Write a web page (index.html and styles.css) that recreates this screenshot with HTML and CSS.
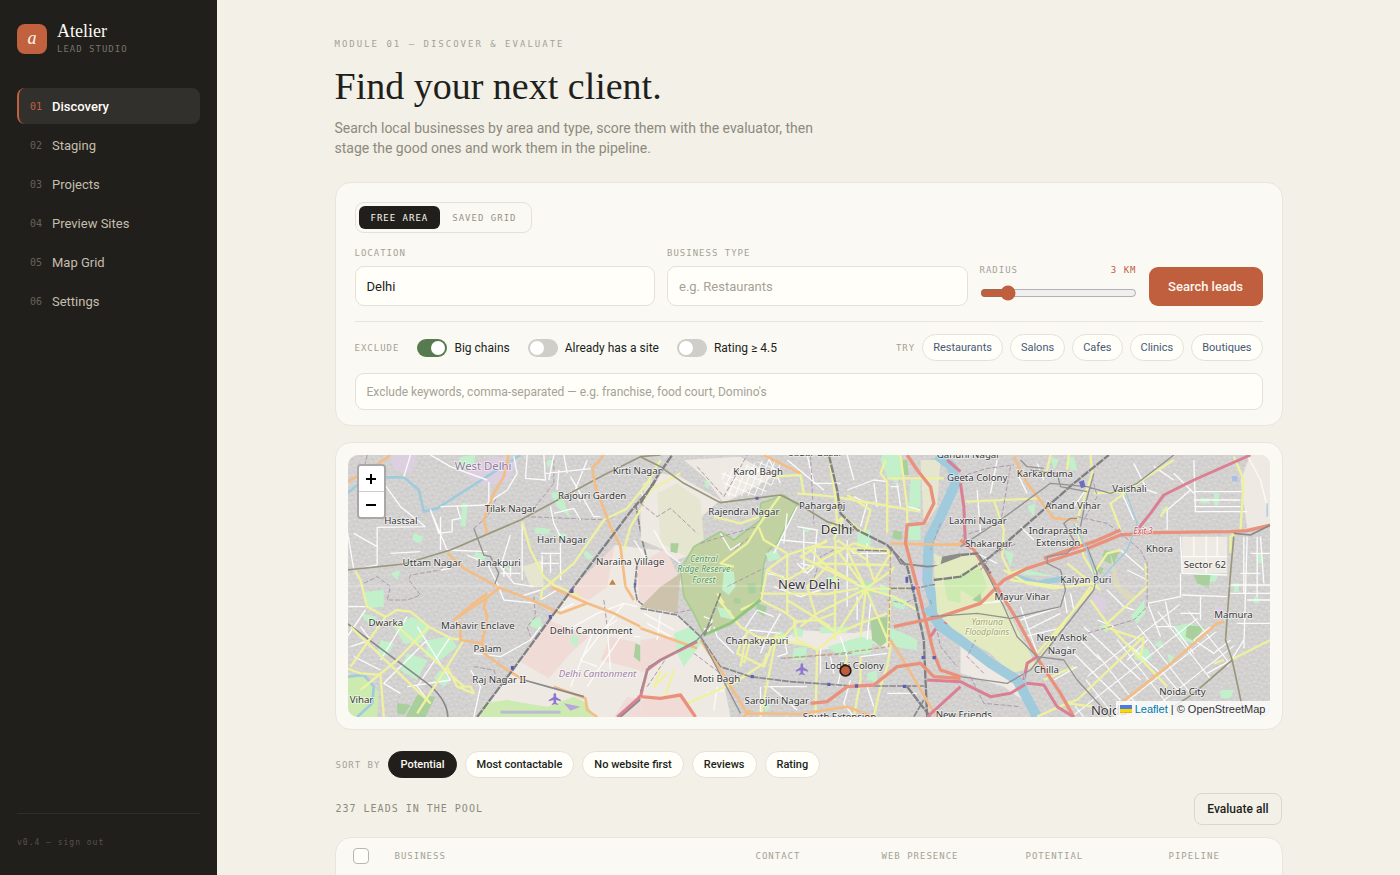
FILE: index.html
```html
<!DOCTYPE html>
<html lang="en">
<head>
<meta charset="utf-8">
<meta name="viewport" content="width=device-width, initial-scale=1">
<title>Atelier Lead Studio</title>
<link rel="stylesheet" href="styles.css">
</head>
<body>
<div class="shell">

<aside class="sidebar">
	<div class="brand">
		<div class="brand-mark">a</div>
		<div>
			<div class="brand-name">Atelier</div>
			<div class="brand-sub">LEAD STUDIO</div>
		</div>
	</div>
	<nav class="nav">
		<a class="nav-item active" href="#"><span class="num">01</span>Discovery</a>
		<a class="nav-item" href="#"><span class="num">02</span>Staging</a>
		<a class="nav-item" href="#"><span class="num">03</span>Projects</a>
		<a class="nav-item" href="#"><span class="num">04</span>Preview Sites</a>
		<a class="nav-item" href="#"><span class="num">05</span>Map Grid</a>
		<a class="nav-item" href="#"><span class="num">06</span>Settings</a>
	</nav>
	<div class="side-foot"><a href="#">v0.4 — sign out</a></div>
</aside>

<main class="main">
<div class="content">

	<div class="eyebrow">MODULE 01 — DISCOVER &amp; EVALUATE</div>
	<h1>Find your next client.</h1>
	<p class="lede">Search local businesses by area and type, score them with the evaluator, then stage the good ones and work them in the pipeline.</p>

	<!-- Search form -->
	<form class="card search">
		<div class="seg">
			<button type="button" class="seg-btn on">FREE AREA</button>
			<button type="button" class="seg-btn">SAVED GRID</button>
		</div>

		<div class="fields">
			<div class="field">
				<label class="mono" for="location">LOCATION</label>
				<input class="input" id="location" type="text" value="Delhi">
			</div>
			<div class="field">
				<label class="mono" for="type">BUSINESS TYPE</label>
				<input class="input" id="type" type="text" placeholder="e.g. Restaurants">
			</div>
			<div class="radius">
				<div class="radius-top"><label class="mono" for="radius">RADIUS</label><span class="mono accent">3 KM</span></div>
				<input id="radius" type="range" min="1" max="15" value="3">
			</div>
			<button type="button" class="btn-primary">Search leads</button>
		</div>

		<div class="filters">
			<span class="mono">EXCLUDE</span>
			<label class="toggle"><input type="checkbox" checked>Big chains</label>
			<label class="toggle"><input type="checkbox">Already has a site</label>
			<label class="toggle"><input type="checkbox">Rating ≥ 4.5</label>
			<div class="try">
				<span class="mono">TRY</span>
				<button type="button" class="chip">Restaurants</button>
				<button type="button" class="chip">Salons</button>
				<button type="button" class="chip">Cafes</button>
				<button type="button" class="chip">Clinics</button>
				<button type="button" class="chip">Boutiques</button>
			</div>
		</div>

		<input class="input keywords" type="text" aria-label="Exclude keywords" placeholder="Exclude keywords, comma-separated — e.g. franchise, food court, Domino's">
	</form>

	<!-- Map -->
	<div class="card map-card">
	<div class="map">
	<svg class="map-svg" viewBox="0 0 2769 786" preserveAspectRatio="xMidYMid slice">
		<defs>
			<pattern id="urban" width="60" height="54" patternUnits="userSpaceOnUse">
				<rect width="60" height="54" fill="#d2d1d0"/>
				<path d="M4 5h5v4h-5zM17 2h3v8h-3zM31 8h8v3h-8zM50 4h4v6h-4zM8 19h7v3h-7zM24 17h4v5h-4zM42 20h6v3h-6zM55 24h4v5h-4zM3 33h4v6h-4zM17 30h9v3h-9zM35 32h3v7h-3zM47 37h7v3h-7zM10 45h4v4h-4zM25 43h6v4h-6zM41 47h4v5h-4z" fill="#dededd"/>
				<path d="M12 11h6v3h-6zM40 2h4v4h-4zM33 22h4v4h-4zM52 14h4v4h-4zM8 27h4v3h-4zM28 37h4v4h-4zM44 29h5v3h-5zM54 46h4v4h-4zM18 49h4v3h-4z" fill="#c5c4c4"/>
			</pattern>
			<pattern id="blocks" width="74" height="66" patternUnits="userSpaceOnUse" patternTransform="rotate(-38)">
				<path d="M0 1H74M1 0V66" stroke="#fff" stroke-width="4" fill="none"/>
			</pattern>
			<pattern id="lanes" width="18" height="24" patternUnits="userSpaceOnUse" patternTransform="rotate(22)">
				<path d="M0 1H18M1 0V24" stroke="#fff" stroke-width="3" fill="none"/>
			</pattern>
			<path id="plane" d="M0-17c3 0 4 4 4 7v5l14 9v4L4 4v8l5 4v3l-9-3-9 3v-3l5-4V4l-14 4V4l14-9v-5c0-3 1-7 4-7z" fill="#8f76cf"/>
		</defs>
		<rect width="2769" height="786" fill="url(#urban)"/>

		<!-- west -->
		<g transform="translate(-21 -45)">
			<path class="lilac" d="M390 75 470 50 535 60 500 125 430 135 375 105z"/>
			<path class="lilac" d="M150 45 230 45 210 100 160 90z"/>
			<path class="land" d="M690 455 825 315 900 325 960 330V831H410L520 685z"/>
			<path class="pink" d="M690 450 822 318 800 440 745 480 690 460zM625 540 745 590 690 640 625 715 540 665zM890 370 960 350V500L895 480zM810 590 880 605 950 640 930 700 780 660zM860 770 960 790V831H820z"/>
			<path class="park" d="M430 790 500 780 620 800 700 770 740 790 760 831H420zM20 700 90 720 115 760 110 831H20z"/>
			<path class="wood" d="M885 610 930 630 915 680 880 650zM230 765 285 770 255 831H195zM170 790 210 795 190 825 170 820z"/>
			<path class="mint" d="M360 50 405 45 400 80 345 90zM585 262 630 268 625 284 583 280zM650 280 680 280 675 295 650 293zM70 455 130 450 130 500 85 505zM160 560 215 530 270 560 240 610 190 610zM260 600 330 590 350 620 300 660 255 650zM120 600 160 610 140 650 110 640zM200 640 260 660 230 720 180 690zM60 520 110 530 90 560zM300 690 330 720 310 740 280 715zM570 540 600 530 605 570 570 560zM735 330 760 350 745 360 730 345zM365 190 382 190 375 260 360 258zM220 280 250 290 240 310 215 300zM620 60 635 60 635 78 620 78zM630 160 660 155 690 235 650 200zM490 380 515 385 505 395zM405 335 440 345 430 360 400 355zM150 400 180 390 170 420zM690 585 715 590 710 620 690 610z"/>
			<path class="sand" d="M545 380 605 360 610 440 570 440zM905 130 960 110V230L920 210z"/>
			<rect x="480" y="812" width="180" height="9" fill="#b9bcd4"/>
			<path class="canal" d="M20 160 80 112 190 112 235 150 250 215 290 205 540 45M20 710 70 705 100 740 95 790 50 831"/>
			<path class="admin" d="M70 430 110 410 150 440 140 480 200 480 240 465 205 420 210 405 300 390 320 360M400 265 440 230 470 170M640 130 640 60M640 130 560 230 800 240 850 210M580 470 585 530 560 560 570 590M80 45 70 90M790 480 800 560M400 680 460 690 470 720"/>
			<path class="minor" d="M270 45 330 80 440 120M445 125V200M520 50 530 100 500 150 440 190M300 200 440 195M350 200 360 235 335 240 335 275 295 280 270 210 320 330 440 335M110 262 255 260M110 262V375M40 280 110 320M110 375 40 390 20 270M150 340 240 335M130 130 180 200 255 260M300 230 300 330M560 45 555 115 615 120 610 45M615 100 760 85M625 120 640 45M650 150 655 90M640 220 700 205 720 240M630 200 640 250 660 290V420M600 340 660 340M605 345V400M630 340V400M600 370H655M545 250V420M510 285 480 380 520 430 580 440M480 400 540 400M490 360V410M510 360V410M380 345 440 370 470 430 490 480 590 490M540 470 600 450M600 480 650 450M330 385 300 390M20 500H75M75 510 20 590M660 510 700 490M720 660 850 490M700 560 770 520 850 490 890 500M690 740 760 570M740 740 860 560M880 590H960M810 690 800 560 830 540M720 660 770 680M690 110 760 230 780 230M740 60 700 160 720 185M670 45 680 100M200 530 120 660M260 600 130 730 180 760M60 560 90 600 30 620M230 560 330 720 200 740M120 690 40 650M330 590 230 740 270 790M400 640 480 650 570 600 600 560M390 690 420 740 400 831M880 300 960 420M900 150 950 280M190 110 210 45"/>
			<path class="rail-thin" d="M20 550 240 715Q320 770 322 831"/>
			<path class="metro" d="M20 390 190 372 330 330 540 240 790 105 900 50 960 45"/>
			<path class="metro-d" d="M400 265 430 345 450 350 475 400 460 440"/>
			<path class="admin" d="M890 400 885 440"/>
			<path class="rail-d" d="M890 370 882 440 890 480 920 505 960 512M885 190 905 300 920 360"/>
			<path class="yellow" d="M45 395 60 420 80 500 135 530 170 510 210 515 265 560 330 595 370 600 320 680 230 820M135 530 30 680M150 540 370 740M30 560 270 790M265 560 170 660 60 750M20 685 60 700 120 705 130 831M320 680 350 740 400 760 390 740 360 740M545 245 570 330 610 410 640 435 720 470M600 480 605 450 700 370 790 240 860 205 920 130 960 60M960 110 900 210 870 260 850 330M940 760 940 720 960 690"/>
			<path class="orange" d="M20 125 80 95 150 45M505 45 490 110 460 160 430 240 440 280M320 340 370 385 480 445 560 475 660 520 740 490 630 440M740 490 820 520 960 590M475 445 430 480 340 540 400 490 440 460M440 470 430 500 440 530 425 610 360 600 360 545M425 610 430 640 500 690 550 720M640 740 735 775 740 810 770 831M790 45 755 85 765 140 810 260 840 320 855 440 880 480M890 770 960 775"/>
			<path class="rail" d="M410 831 520 685 700 440 870 215 960 110"/>
			<path class="red" d="M960 660 930 680 910 760 830 831"/>
			<path class="rail-thin" d="M960 665 935 690 915 765 840 831M550 720 640 745 730 770"/>
			<path d="M816 418 826 434H806z" fill="#c9803f"/>
			<use href="#plane" x="643" y="776"/>
			<path d="M670 790 720 800 690 812z" fill="#b7a6dd"/>
			<path d="M690 448h9v11h-9zM625 525h9v11h-9zM511 678h9v11h-9zM880 430h7v12h-7z" fill="#5a5aa8"/>
		</g>

		<!-- centre -->
		<g transform="translate(879 -45)">
			<path class="land" d="M0 300 60 325 110 360 160 340 160 250 240 180 120 110 60 100 0 210zM0 500 110 520 180 600 200 640 240 680 270 831H0zM130 60 300 50 400 110 250 190 190 110zM430 600 540 630 700 610 750 630 740 560 640 580 470 570z"/>
			<path class="sand" d="M50 160 110 130 180 180 190 300 140 350 60 310zM840 60 900 60 890 200 850 260z"/>
			<path class="pink" d="M0 370 75 325 100 380 130 440 60 450 0 490zM0 600 80 590 170 605 30 680 0 700zM0 780 120 770 160 831H0z"/>
			<path d="M120 400 110 520 0 500 60 440z" fill="#cdc3ac"/>
			<path class="forest" d="M360 190 430 165 470 195 440 250 410 310 385 330 370 370 360 480 270 550 190 585 160 520 130 470 120 390 160 320 240 275 280 300 320 270 360 240z"/>
			<path class="mint" d="M250 390 280 395 285 440 265 465 245 450zM375 340 410 330 420 355 385 365zM650 270H690V320H650zM720 60 740 110 770 130 790 90 780 45H725zM810 120H840V200L805 210zM100 580 150 560 190 600 130 680 110 640zM460 560 490 570 485 590 455 590zM540 560H620V580H540zM460 625 500 620 495 660 455 660zM560 620 660 590 700 600 690 640 600 650zM740 560 790 580 830 600 830 630 760 620zM680 700 710 690 710 725 680 720zM720 430 750 450 740 470 715 460zM800 255H840V300H805zM370 780 390 800 375 820zM420 570 440 590 400 620zM750 470 800 480 790 510 760 500zM480 260 510 265 500 280zM190 120 210 130 200 150zM560 410 590 410 590 430 560 430zM230 500 270 510 280 540 240 530z"/>
			<path class="wood" d="M350 490 380 500 370 530 345 510zM760 270 785 275 785 300 755 295zM690 540 740 530 745 600 720 620 695 600zM785 60 800 60 805 105 790 105zM90 310 115 310 110 340 90 335zM320 430 345 430 345 460 325 462zM280 475 300 475 300 492 280 490zM900 420 950 410 960 500 930 490z"/>
			<circle cx="676" cy="446" r="24" fill="#b5e5b9"/>
			<path class="lilac" d="M825 390 850 380 855 440 830 445z"/>
			<path class="flood" d="M880 340 960 380V560L900 500z"/>
			<path class="river" d="M890 45 935 80 945 130 900 230 865 300 860 420 890 520 960 600"/>
			<path d="M905 350 960 340V375L900 375z" fill="#8c8c8c"/>
			<path d="M240 100 400 50 430 90 370 165 260 170z" fill="url(#lanes)"/>
			<path class="minor" d="M380 45 420 130M440 60 550 150M500 45 520 130M520 130H600M620 150 700 120 740 125M620 45 640 120M640 170 680 190 660 260M770 130 780 200M700 130 710 200M750 140H775M400 340 470 200M440 220 430 310M470 260 530 270 520 370M490 270V400M480 370 520 380 500 400 470 370M420 300 530 310M380 400 430 410M400 440 480 470 540 450M620 320 640 340 740 340M680 310V380M420 520 380 590 360 640M400 530 350 510 310 570M430 590 440 640 410 650M300 600 330 570 420 580M280 640 230 590 220 560M360 740 360 831M370 740H500M390 740 470 810M230 740 220 810M200 760 250 750M630 720 610 790 640 831M680 740 700 800M740 760H830M600 700 590 740M660 650 740 640M570 650 580 700M190 530 215 540 205 575 190 565M120 370 80 340 40 270M240 280 270 330 300 310M800 200 840 210M540 620V700M600 590 620 650M620 300V500M650 470V540M690 490 680 600M10 520 100 570M20 550 90 590M60 520 50 600"/>
			<path class="admin" d="M0 190 50 230 90 205 170 280M180 310 260 285 350 260 330 290 280 330M260 440 370 385M100 520 150 510M170 80 250 170 320 45M510 45 520 250M20 740 80 650M900 250 870 330M870 480 900 620 950 680M420 655 640 640M160 640 240 700M740 480 790 490 840 470M580 330 540 350 520 420"/>
			<path class="yellow" d="M0 190 30 150 120 100M220 230 300 250 355 230M420 165 350 262 320 310 240 370 280 380M355 262 370 300 440 340M440 345 560 305M585 300V340L640 310M580 340 440 420 380 390 362 480 300 510M380 390 440 345V520M360 460 560 462 655 445M360 480 430 515 470 545 430 590 300 610M585 340 583 600M500 320 560 380 650 430M525 370 750 375M570 560 440 480M530 320 740 330 755 350M560 300 480 350M590 300 680 360 700 420M640 310 750 340M750 340 700 425M676 446 760 470 830 510M676 446 750 620M676 446 590 580M676 446 530 520 480 560M676 446 590 330M676 446 755 390M676 446 620 330M676 446H820M676 446 660 590M676 446 480 350M580 520 530 540 500 440 560 380M590 580 530 540 470 545M530 630 470 600 460 540M590 580 530 630 525 830M590 580 660 550 740 520M470 160 580 170 640 180 840 215M400 110 480 105 490 160M565 45 575 110 585 170 590 260M735 60 720 100 740 125 740 280M740 115H910M780 45 800 200 800 250M620 165 690 210 670 280 610 230 560 270M610 230 580 300M235 480 300 560 350 590 520 620M300 610 290 640 370 680 400 600 410 580M320 570 300 680M330 600 310 670M140 790 280 730 370 670 380 640M410 580 360 831M660 650 660 720 640 831M620 650 610 700M750 620 740 680 720 740 700 831M750 480 740 610M230 460 250 490M60 690 40 740 80 700M100 690 70 780M750 400 760 380"/>
			<path d="M360 480 270 550 190 585" fill="none" stroke="#8fc67a" stroke-width="9"/>
			<path class="admin-o" d="M750 330 745 620 600 640 430 655"/>
			<path class="metro" d="M0 50 60 80 130 130 240 188 420 165 470 190 560 245 640 270"/>
			<path class="rail-d" d="M0 505 110 525 180 590 240 680 330 710 450 725 640 738H850M240 460 190 590M750 445 820 445 960 420M820 830 850 780M650 330 740 333"/>
			<path class="rail" d="M0 190 50 110 95 45M565 45 590 150 600 220 650 270 740 315 800 380 820 460 850 600 855 720 860 831M800 740 870 831"/>
			<path class="rail-thin" d="M750 320 780 370 860 380 960 372"/>
			<path class="orange" d="M0 565 100 600 170 625M180 600 240 690 320 820 480 822 620 800 700 831M370 45 480 100M750 310 960 315M750 600 800 680 870 800 890 831M330 810 310 831"/>
			<path class="trunk" d="M800 45 830 90 870 140 880 190 850 250 800 255 795 310 830 440 860 560 880 640 900 690 960 710M0 770 60 775 120 765 165 831M510 790 560 785 620 740 700 735 770 680 840 670 880 710 960 715"/>
			<path class="red" d="M0 770 20 690 60 660 170 605M870 590 890 560 960 530M860 831 960 740M920 60 960 95"/>
			<path class="metro-d" d="M0 755 25 680 170 600 215 550M180 590 300 820"/>
			<use href="#plane" x="484" y="687"/>
			<path d="M345 170h9v9h-9zM330 705h10v10h-10zM560 728h10v10h-10zM643 733h10v10h-10zM795 410h8v18h-8zM813 438h10v12h-10zM843 648h10v10h-10zM876 648h10v10h-10zM787 734h10v10h-10z" fill="#5f5fb0"/>
		</g>

		<!-- east -->
		<g transform="translate(1839 -45)">
			<path class="flood" d="M-80 380 0 350 50 340 100 440 150 530 230 680 150 700 90 640 0 590-70 520z"/>
			<path class="park" d="M0 400 60 385 80 440 50 480 0 450zM-50 420 0 410 0 490-40 480z"/>
			<path class="land" d="M870 45H940V250L860 265 840 120zM665 290H800V400H665zM0 590 90 660 180 720 200 790 130 740 0 700z"/>
			<path class="river" d="M-100 500-60 560 0 600 90 670 170 720 230 831"/>
			<path class="river-s" d="M165 410 230 430 310 415"/>
			<path class="mint" d="M760 160H775V195H760zM720 175H745V190H720zM530 630 560 625 575 650 550 670 520 655zM640 560 680 550 730 560 700 610 660 600zM510 530 550 480 555 520 530 550zM725 400 775 400 765 425 730 425zM890 340H905V370H890zM820 430H835V455H820zM415 560 445 550 440 580zM200 200 225 190 220 230zM320 50 340 50 350 90 330 90zM170 400 200 390 290 410 200 405zM130 330 160 340 150 380zM580 615 600 600 610 625zM620 640 640 650 630 680zM880 470H895V490H880zM780 750 820 750 810 775 780 775zM270 50 295 60 280 90zM600 210 620 200 615 220z"/>
			<path class="wood" d="M680 555 730 560 705 605 675 590zM35 480 60 460 65 490zM700 405 750 405 745 445 710 430zM430 330 475 335 460 375 425 360zM400 375 430 385 420 405z"/>
			<path d="M450 340 480 440 530 470 500 480 460 440z" fill="#dcd9bf"/>
			<path class="lilac" d="M400 460 440 480 430 520 400 500zM760 500 790 500 785 530 760 525z"/>
			<path d="M410 640 640 480 850 640 600 831H330z" fill="url(#blocks)"/>
			<path class="minor" d="M700 60 705 215 840 215M705 155H850M700 180H840M700 200H840M705 215H860M620 210 690 150M620 210V270M640 100 700 160M580 80 640 120M660 290 665 400 800 405M665 350H800M737 290V400M700 290V350M770 290V350M660 400V470L560 490M860 290 850 625M890 290V470M810 435H930M810 460H930M870 340H930M830 550H930M840 400H900M665 465 800 470M720 470V540M660 520H720M560 485 600 590M615 485 630 560M590 560H640M750 560 700 600M700 600 760 640 810 600M850 600 800 680M930 480H860M900 290 910 430M850 290V460M50 150 60 280M90 160 110 60M180 260 220 300M60 490 170 480M180 500 230 640M200 570 300 520M190 590 320 560M310 460 320 520M330 460 340 510M180 540 300 500M350 590 420 660M320 620 480 780M370 560 540 720M410 540 460 560M500 390 560 420M440 450 490 500 520 510M480 330 550 390M390 130 340 200M520 240 480 150M520 70 560 150 590 160M230 70 250 120M170 100 200 160M280 720 350 680M860 45 900 120 920 200M30 330 110 370M740 700 830 650M600 690 660 760M500 610 600 700M640 560 700 640M560 600 500 660"/>
			<path class="yellow" d="M15 185 240 175M100 180 130 270 125 350 150 400 260 365M130 390 200 430 280 445 400 430M150 420 300 440M410 430 230 640M390 440 240 650M345 250 370 350 400 400 440 340 480 330M320 370 420 450M390 45 395 100 350 240M270 45 260 90 240 100M325 45 320 90M400 160 500 155 450 190 480 270M500 155 560 110 640 60M390 480 440 550 620 740M440 550 560 440 555 370M550 590 350 780 320 790M250 720 340 680M430 560 550 600 540 650M820 50 850 120 840 270 810 290V340M810 660 930 600M790 660 760 670M620 200 600 230M230 830 320 790 400 800"/>
			<path class="orange" d="M160 50 200 130 280 235 350 240M480 790 620 680 770 550 790 545M-40 315 10 310"/>
			<path class="trunk" d="M-200 560-60 530 60 490 130 420 200 385 370 330 480 285 580 278 810 275 860 272 930 255M0 300 40 330 90 410 170 540 240 670 300 760 340 831"/>
			<path class="trunk" d="M250 355 400 305 480 270"/>
			<path class="red" d="M870 45 700 120 610 165 570 220 530 270M-100 720 0 725 40 745 90 770 150 760 200 730 250 735 290 800 340 831M0 130 10 200 15 320M190 720 200 670 230 650"/>
			<path class="rail" d="M-80 420 0 410 90 350 180 270 340 130 445 45M0 345 50 340 90 400"/>
			<path class="metro-d" d="M0 320 120 240 270 130 380 140 450 160 530 130 640 45M210 90 290 100 300 140 380 155M180 60 200 80 250 85M-90 530 50 520 150 535 300 500 315 450 300 390 260 370 260 350 320 340 345 310 310 250 330 235 350 235M380 320 410 400 400 450 330 540 210 690 140 730 0 710M50 340 130 500 170 590 230 650M230 650 310 660 350 720 450 831M400 100 370 210 360 260"/>
			<path class="metro" d="M820 290 810 400 795 600 815 660 845 800M815 660 700 760 640 800"/>
			<path class="rail-thin" d="M820 280 870 285 930 255"/>
			<path class="admin" d="M350 230 440 250 480 280 540 330 560 370 560 500 520 540 380 580M395 110 410 170 370 240M0 110 80 85 160 75M150 80 120 250 0 290M70 700 20 650 45 600M30 710 70 790 180 800M60 390 100 340 170 310"/>
			<path class="canal-s" d="M490 140 530 250 500 330 410 430 380 330 340 250M190 700 215 831M920 190V230"/>
			<path d="M355 125 370 120 375 140 362 145z" fill="#6f6fc0"/>
			<path d="M815 108h16v16h-16z" fill="#a9bfe8"/>
		</g>
		<path d="M0 393H2769" stroke="#fff" stroke-opacity=".4" stroke-width="3"/>

		<!-- labels -->
		<g class="lbl" transform="translate(-21 -45)">
			<text class="lbl-area" x="428" y="90">West Delhi</text>
			<text x="890" y="103">Kirti Nagar</text>
			<text x="755" y="177">Rajouri Garden</text>
			<text x="510" y="215">Tilak Nagar</text>
			<text x="181" y="252">Hastsal</text>
			<text x="664" y="308">Hari Nagar</text>
			<text x="275" y="379">Uttam Nagar</text>
			<text x="476" y="379">Janakpuri</text>
			<text x="869" y="375">Naraina Village</text>
			<text x="136" y="559">Dwarka</text>
			<text x="412" y="566">Mahavir Enclave</text>
			<text x="441" y="637">Palam</text>
			<text x="752" y="582">Delhi Cantonment</text>
			<text class="lbl-it" x="771" y="710">Delhi Cantonment</text>
			<text x="476" y="728">Raj Nagar II</text>
			<text x="63" y="788">Vihar</text>
		</g>
		<g class="lbl" transform="translate(879 -45)">
			<text x="525" y="48">Sadar Bazar</text>
			<text x="353" y="105">Karol Bagh</text>
			<text x="310" y="224">Rajendra Nagar</text>
			<text x="545" y="208">Paharganj</text>
			<text class="lbl-city" x="588" y="283">Delhi</text>
			<text class="lbl-city" x="506" y="448">New Delhi</text>
			<text class="lbl-wood" x="190" y="366">Central</text>
			<text class="lbl-wood" x="190" y="397">Ridge Reserve</text>
			<text class="lbl-wood" x="190" y="428">Forest</text>
			<text x="349" y="613">Chanakyapuri</text>
			<text x="642" y="687">Lodhi Colony</text>
			<text x="229" y="725">Moti Bagh</text>
			<text x="409" y="792">Sarojini Nagar</text>
			<text x="597" y="840">South Extension</text>
		</g>
		<g class="lbl" transform="translate(1839 -45)">
			<text x="24" y="55">Gandhi Nagar</text>
			<text x="50" y="122">Geeta Colony</text>
			<text x="253" y="112">Karkarduma</text>
			<text x="507" y="155">Vaishali</text>
			<text x="337" y="208">Anand Vihar</text>
			<text x="52" y="253">Laxmi Nagar</text>
			<text x="293" y="282">Indraprastha</text>
			<text x="293" y="319">Extension</text>
			<text x="84" y="322">Shakarpur</text>
			<text class="lbl-exit" x="548" y="283">Exit 3</text>
			<text x="597" y="337">Khora</text>
			<text x="733" y="383">Sector 62</text>
			<text x="376" y="428">Kalyan Puri</text>
			<text x="185" y="481">Mayur Vihar</text>
			<text x="819" y="534">Mamura</text>
			<text class="lbl-flood" x="80" y="554">Yamuna</text>
			<text class="lbl-flood" x="80" y="585">Floodplains</text>
			<text x="304" y="603">New Ashok</text>
			<text x="304" y="641">Nagar</text>
			<text x="258" y="699">Chilla</text>
			<text x="666" y="764">Noida City</text>
			<text class="lbl-city" x="446" y="826">Noida</text>
			<text x="10" y="834">New Friends</text>
		</g>
		<circle cx="1494" cy="647" r="16" fill="#bf5b38" stroke="#1f1d19" stroke-width="5"/>
	</svg>
	<div class="zoom">
		<button type="button" aria-label="Zoom in"><svg viewBox="0 0 12 12"><path d="M6 1v10M1 6h10"/></svg></button>
		<button type="button" aria-label="Zoom out"><svg viewBox="0 0 12 12"><path d="M1 6h10"/></svg></button>
	</div>
	<div class="attrib"><svg viewBox="0 0 12 8"><path fill="#4c7be1" d="M0 0h12v4H0z"/><path fill="#ffd500" d="M0 4h12v3H0z"/><path fill="#e0bc00" d="M0 7h12v1H0z"/></svg> <a href="#">Leaflet</a> | © OpenStreetMap</div>
	</div>
	</div>

	<!-- Sorting -->
	<div class="sort">
		<span class="mono">SORT BY</span>
		<button type="button" class="pill on">Potential</button>
		<button type="button" class="pill">Most contactable</button>
		<button type="button" class="pill">No website first</button>
		<button type="button" class="pill">Reviews</button>
		<button type="button" class="pill">Rating</button>
	</div>

	<div class="pool">
		<span class="pool-count">237 LEADS IN THE POOL</span>
		<button type="button" class="btn-line">Evaluate all</button>
	</div>

	<div class="card leads">
		<table>
			<thead>
				<tr>
					<th class="c-check"><input type="checkbox" aria-label="Select all"></th>
					<th>BUSINESS</th>
					<th class="c-contact">CONTACT</th>
					<th class="c-web">WEB PRESENCE</th>
					<th class="c-pot">POTENTIAL</th>
					<th class="c-pipe">PIPELINE</th>
				</tr>
			</thead>
		</table>
	</div>

</div>
</main>
</div>
</body>
</html>
```
FILE: styles.css
```css
* { box-sizing: border-box; }

body {
	margin: 0;
	background: #f3f0e8;
	color: #211f1b;
	font-family: Roboto, "Liberation Sans", sans-serif;
	font-size: 13px;
}

button, input { font-family: inherit; margin: 0; }
a { text-decoration: none; }

.shell { display: flex; height: 100vh; }

/* sidebar */
.sidebar {
	display: flex;
	flex-direction: column;
	flex: none;
	width: 217px;
	padding: 21px 17px 24px;
	background: #211f1b;
}
.brand {
	display: flex;
	align-items: center;
	gap: 10px;
	height: 36px;
}
.brand-mark {
	width: 30px;
	height: 30px;
	border-radius: 8px;
	background: #c1613e;
	color: #fbf6ee;
	font: italic 18px/29px "Liberation Serif", serif;
	text-align: center;
}
.brand-name {
	color: #fbf9f2;
	font: 18px/20px "Liberation Serif", serif;
}
.brand-sub {
	color: #77736a;
	font: 9px/16px "DejaVu Sans Mono", monospace;
	letter-spacing: 1px;
}
.nav {
	display: flex;
	flex-direction: column;
	gap: 3px;
	margin-top: 31px;
}
.nav-item {
	display: flex;
	align-items: center;
	height: 36px;
	padding-left: 11px;
	border-left: 2px solid transparent;
	border-radius: 8px;
	color: #c4bead;
}
.num {
	width: 22px;
	color: #66625a;
	font: 10px "DejaVu Sans Mono", monospace;
}
.nav-item.active {
	border-left-color: #c1613e;
	background: #31302c;
	color: #fffdf8;
	font-weight: 500;
}
.active .num { color: #c1613e; }
.side-foot {
	margin-top: auto;
	padding-top: 21px;
	border-top: 1px solid #302e2a;
}
.side-foot a {
	display: block;
	color: #57534b;
	font: 8px/16px "DejaVu Sans Mono", monospace;
	letter-spacing: 1px;
}

/* page */
.main {
	flex: 1;
	min-width: 0;
	padding: 37px 24px 0;
	overflow: hidden;
}
.content { max-width: 948px; margin: 0 auto; }
.mono, .eyebrow, .pool-count, th {
	color: #a5a296;
	font: 9px/12px "DejaVu Sans Mono", monospace;
	letter-spacing: 1px;
}
.mono.accent { color: #c1613e; }
.eyebrow { line-height: 14px; letter-spacing: 2px; }
h1 {
	margin: 12px 0 9px;
	font: 38px/46px "Liberation Serif", serif;
}
.lede {
	max-width: 500px;
	margin: 0 0 24px;
	color: #8d8a7d;
	font-size: 14px;
	line-height: 20px;
}
.card {
	border: 1px solid #e8e5dc;
	border-radius: 16px;
	background: #faf9f3;
}

/* search */
.search { padding: 19px 19px 15px; }
.seg {
	display: inline-flex;
	padding: 3px;
	border: 1px solid #e4e1d8;
	border-radius: 9px;
}
.seg-btn {
	height: 23px;
	padding: 0 12px;
	border: 0;
	border-radius: 6px;
	background: none;
	color: #97948a;
	font: 9px "DejaVu Sans Mono", monospace;
	letter-spacing: 1px;
}
.seg-btn.on { background: #211f1b; color: #faf7ef; }
.fields {
	display: grid;
	grid-template-columns: 1fr 1fr 157px 114px;
	align-items: end;
	gap: 12px;
	margin-top: 14px;
}
.field { display: flex; flex-direction: column; gap: 7px; }
.input {
	width: 100%;
	height: 40px;
	padding: 0 11px;
	border: 1px solid #e4e1d8;
	border-radius: 9px;
	background: #fffef9;
	color: #211f1b;
	font-size: 13px;
}
.input::placeholder { color: #a5a296; }
.radius { padding-bottom: 5px; }
.radius-top { display: flex; justify-content: space-between; }
.radius input {
	display: block;
	width: 100%;
	height: 16px;
	margin-top: 9px;
	accent-color: #bf5f3d;
}
.btn-primary {
	height: 39px;
	border: 0;
	border-radius: 9px;
	background: #bf5f3d;
	color: #fdf6ee;
	font-size: 13px;
	font-weight: 500;
}
.filters {
	display: flex;
	align-items: center;
	gap: 18px;
	margin-top: 15px;
	padding: 12px 0;
	border-top: 1px solid #e8e5dc;
}
.toggle {
	display: flex;
	align-items: center;
	gap: 7px;
	font-size: 12px;
}
.toggle input {
	appearance: none;
	width: 30px;
	height: 18px;
	padding: 2px;
	border-radius: 9px;
	background: #cfcec9;
}
.toggle input::before {
	content: "";
	display: block;
	width: 14px;
	height: 14px;
	border-radius: 50%;
	background: #fff;
}
.toggle input:checked { background: #577a50; }
.toggle input:checked::before { margin-left: auto; }
.try {
	display: flex;
	align-items: center;
	gap: 7px;
	margin-left: auto;
}
.chip, .pill {
	height: 27px;
	padding: 0 10px;
	border: 1px solid #e4e1d8;
	border-radius: 14px;
	background: #fffef9;
	color: #465a75;
	font-size: 11px;
}
.keywords { display: block; height: 37px; font-size: 12px; }

/* map */
.map-card { margin-top: 16px; padding: 12px; }
.map {
	position: relative;
	height: 262px;
	border-radius: 10px;
	overflow: hidden;
}
.map-svg { display: block; width: 100%; height: 100%; }
.map-svg path { stroke-linejoin: round; }
.land { fill: #eeeae3; }
.pink { fill: #f0dbd6; }
.lilac { fill: #dccfe0; }
.sand { fill: #e6e5cf; }
.park { fill: #cdeab0; }
.wood { fill: #a9cf9c; }
.mint { fill: #c2f0cb; }
.flood { fill: #e4eabf; }
.forest { fill: #c1d1a2; stroke: #a3cc8f; stroke-width: 5; }
.river, .river-s, .canal, .canal-s { fill: none; stroke: #9fcbdc; }
.river { stroke-width: 30; }
.river-s { stroke-width: 16; }
.canal { stroke-width: 8; }
.canal-s { stroke-width: 4; }
.minor, .yellow, .orange, .trunk, .red, .rail, .rail-d, .rail-thin,
.metro, .metro-d, .admin, .admin-o { fill: none; }
.minor { stroke: #fbfbfb; stroke-width: 4; }
.yellow { stroke: #edf1a0; stroke-width: 7; }
.orange { stroke: #f3bd85; stroke-width: 8; }
.trunk { stroke: #ea917c; stroke-width: 10; }
.red { stroke: #db7f92; stroke-width: 9; }
.rail { stroke: #808084; stroke-width: 7; stroke-dasharray: 26 3; }
.rail-d { stroke: #88888c; stroke-width: 5; stroke-dasharray: 20 3; }
.rail-thin { stroke: #8a888b; stroke-width: 5; }
.metro { stroke: #99987d; stroke-width: 5; }
.metro-d { stroke: #939292; stroke-width: 4; }
.admin { stroke: #ae98ae; stroke-width: 3; stroke-dasharray: 14 6; }
.admin-o { stroke: #c9a77e; stroke-width: 4; stroke-dasharray: 14 6; }
.lbl {
	fill: #383838;
	stroke: #fff;
	stroke-opacity: .6;
	stroke-width: 5;
	paint-order: stroke;
	font: 29px "Noto Sans", sans-serif;
	text-anchor: middle;
}
.lbl-city { font-size: 39px; }
.lbl-area { fill: #957a9c; font-size: 34px; }
.lbl-it { fill: #a37fa6; font-style: italic; }
.lbl-wood { fill: #4f9a55; font-size: 26px; font-style: italic; }
.lbl-flood { fill: #a1a65c; font-size: 26px; font-style: italic; }
.lbl-exit { fill: #cc5560; font-size: 24px; font-style: italic; }
.zoom {
	position: absolute;
	top: 9px;
	left: 9px;
	border: 2px solid #a9a8a6;
	border-radius: 4px;
	overflow: hidden;
}
.zoom button {
	display: grid;
	place-items: center;
	box-sizing: content-box;
	width: 25px;
	height: 25px;
	padding: 0;
	border: 0;
	background: #fff;
}
.zoom button + button { border-top: 1px solid #ccc; }
.zoom svg { width: 12px; height: 12px; fill: none; stroke: #000; stroke-width: 2; }
.attrib {
	position: absolute;
	right: 0;
	bottom: 0;
	padding: 0 4px;
	background: rgba(255, 255, 255, .8);
	color: #333;
	font: 11px/16px "Liberation Sans", sans-serif;
}
.attrib svg { width: 12px; height: 8px; }
.attrib a { color: #0078a8; }

/* leads */
.sort {
	display: flex;
	align-items: center;
	gap: 8px;
	margin-top: 21px;
	padding-left: 1px;
}
.pill { padding: 0 11px; color: #211f1b; font-weight: 500; }
.pill.on { border-color: #211f1b; background: #211f1b; color: #fdfaf2; }
.pool {
	display: flex;
	align-items: center;
	justify-content: space-between;
	margin: 15px 1px 12px;
}
.pool-count { color: #8d8a7d; font-size: 10px; }
.btn-line {
	height: 32px;
	padding: 0 12px;
	border: 1px solid #dad7ce;
	border-radius: 8px;
	background: none;
	color: #211f1b;
	font-size: 12px;
	font-weight: 500;
}
.leads { height: 120px; padding: 8px 17px; }
table { width: 100%; border-collapse: collapse; table-layout: fixed; }
th { height: 20px; padding: 0; text-align: left; }
.c-check { width: 42px; }
.c-contact { width: 126px; }
.c-web { width: 144px; }
.c-pot { width: 143px; }
.c-pipe { width: 96px; }
th input {
	display: block;
	appearance: none;
	width: 16px;
	height: 16px;
	border: 1px solid #b9b7b0;
	border-radius: 4px;
	background: #fffef9;
}
```
